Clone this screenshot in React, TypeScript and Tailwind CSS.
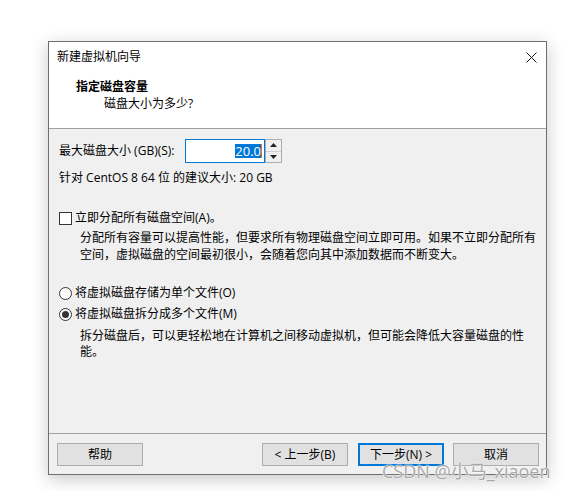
import React from "react";

const font = { fontFamily: '"Open Sans", "Noto Sans CJK SC", sans-serif' };

function Btn({ children, primary }: { children: React.ReactNode; primary?: boolean }) {
  return (
    <div
      className={
        "w-[86px] h-[23px] flex items-center justify-center text-[12px] text-black bg-[#e1e1e1] " +
        (primary ? "border-2 border-[#0078d7]" : "border border-[#adadad]")
      }
    >
      {children}
    </div>
  );
}

export default function App() {
  return (
    <div className="w-[567px] h-[491px] bg-white pt-[41px] pl-[48px] relative overflow-hidden" style={font}>
      <div className="w-[499px] h-[434px] border border-[#6f6f6f] bg-[#f0f0f0] flex flex-col shadow-[0_4px_16px_rgba(0,0,0,0.22)] text-[12px] text-black">
        {/* header */}
        <div className="bg-white h-[87px] border-b border-[#a0a0a0] flex flex-col">
          <div className="h-[30px] flex items-center justify-between pl-[8px] pr-[9px]">
            <span className="leading-[16px]">新建虚拟机向导</span>
            <svg width="11" height="11" viewBox="0 0 11 11" className="mt-[1px]">
              <path d="M0.5 0.5 L10.5 10.5 M10.5 0.5 L0.5 10.5" stroke="#1a1a1a" strokeWidth="1" />
            </svg>
          </div>
          <div className="pl-[27px] pt-[7px] font-bold leading-[16px]">指定磁盘容量</div>
          <div className="pl-[55px] pt-[1px] leading-[16px]">磁盘大小为多少?</div>
        </div>

        {/* body */}
        <div className="flex-1 pl-[10px] pt-[10px]">
          <div className="flex items-center h-[24px]">
            <span className="w-[126px] leading-[16px] whitespace-nowrap">最大磁盘大小 (GB)(S):</span>
            <div className="w-[80px] h-[24px] border border-[#0078d7] bg-white flex items-center justify-end pr-[2px]">
              <span className="bg-[#0078d7] text-white leading-[14px] h-[14px] text-[13px]">20.0</span>
              <span className="w-[1px] h-[14px] bg-[#e07020]" />
            </div>
            <div className="w-[17px] h-[24px] border border-[#adadad] bg-[#f0f0f0] flex flex-col">
              <div className="flex-1 flex items-center justify-center border-b border-[#d0d0d0]">
                <svg width="7" height="4" viewBox="0 0 7 4"><path d="M3.5 0 L7 4 L0 4 Z" fill="#222" /></svg>
              </div>
              <div className="flex-1 flex items-center justify-center">
                <svg width="7" height="4" viewBox="0 0 7 4"><path d="M0 0 L7 0 L3.5 4 Z" fill="#222" /></svg>
              </div>
            </div>
          </div>
          <div className="mt-[7px] leading-[16px]">针对 CentOS 8 64 位 的建议大小: 20 GB</div>

          <div className="mt-[24px] flex items-center h-[16px]">
            <div className="w-[13px] h-[13px] border border-[#333] bg-white" />
            <span className="ml-[3px] leading-[16px]">立即分配所有磁盘空间(A)。</span>
          </div>
          <div className="pl-[21px] mt-[3px] leading-[17px]">
            分配所有容量可以提高性能，但要求所有物理磁盘空间立即可用。如果不立即分配所有
            <br />
            空间，虚拟磁盘的空间最初很小，会随着您向其中添加数据而不断变大。
          </div>

          <div className="mt-[22px] flex items-center h-[16px]">
            <div className="w-[13px] h-[13px] rounded-full border border-[#333] bg-white" />
            <span className="ml-[3px] leading-[16px]">将虚拟磁盘存储为单个文件(O)</span>
          </div>
          <div className="mt-[5px] flex items-center h-[16px]">
            <div className="w-[13px] h-[13px] rounded-full border border-[#333] bg-white flex items-center justify-center">
              <div className="w-[7px] h-[7px] rounded-full bg-[#333]" />
            </div>
            <span className="ml-[3px] leading-[16px]">将虚拟磁盘拆分成多个文件(M)</span>
          </div>
          <div className="pl-[21px] mt-[6px] leading-[16px]">
            拆分磁盘后，可以更轻松地在计算机之间移动虚拟机，但可能会降低大容量磁盘的性
            <br />
            能。
          </div>
        </div>

        {/* footer */}
        <div className="h-[41px] border-t border-[#a0a0a0] flex items-start pt-[9px] pl-[8px] pr-[7px]">
          <Btn>帮助</Btn>
          <div className="flex-1" />
          <div className="flex gap-[10px]">
            <Btn>&lt; 上一步(B)</Btn>
            <Btn primary>下一步(N) &gt;</Btn>
          </div>
          <div className="ml-[9px]">
            <Btn>取消</Btn>
          </div>
        </div>
      </div>

      <div
        className="absolute left-[382px] top-[461px] text-[18px] leading-[20px] text-[#a8a8a8] whitespace-nowrap"
        style={{ textShadow: "0 0 2px #fff, 0 0 1px #fff" }}
      >
        CSDN @小马_xiaoen
      </div>
    </div>
  );
}
